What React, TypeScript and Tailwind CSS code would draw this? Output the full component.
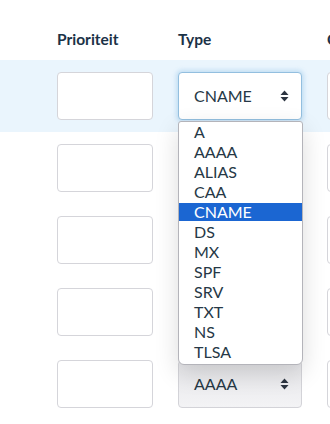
import { useState } from 'react';

const TYPES = ['A', 'AAAA', 'ALIAS', 'CAA', 'CNAME', 'DS', 'MX', 'SPF', 'SRV', 'TXT', 'NS', 'TLSA'];

function Arrows() {
  return (
    <svg width="9" height="12" viewBox="0 0 9 12" className="text-[#2b3440]">
      <path d="M4.5 0.5 L8.5 5 L0.5 5 Z" fill="currentColor" />
      <path d="M4.5 11.5 L8.5 7 L0.5 7 Z" fill="currentColor" />
    </svg>
  );
}

function Input() {
  return <div className="h-[48px] w-[96px] shrink-0 rounded-[4px] border border-[#d5d5da] bg-white" />;
}

function Select({ value, focused, open, muted }: { value: string; focused?: boolean; open?: boolean; muted?: boolean }) {
  return (
    <div className="relative w-[124px] shrink-0">
      <div
        className={
          focused
            ? 'flex h-[48px] items-center justify-between rounded-[4px] border border-[#93bfdf] bg-white pl-[15px] pr-[12px] shadow-[0_0_4px_2px_rgba(120,180,225,0.35)]'
            : muted
            ? 'flex h-[48px] items-center justify-between rounded-[4px] border border-[#d3d3d8] bg-gradient-to-b from-[#e6e6e9] to-[#f3f3f5] pl-[15px] pr-[12px]'
            : 'flex h-[48px] items-center justify-between rounded-[4px] border border-[#d5d5da] bg-white pl-[15px] pr-[12px]'
        }
      >
        <span className="text-[16px] leading-[18px] text-[#263846]">{value}</span>
        <Arrows />
      </div>
      {open && (
        <div className="absolute left-0 top-[calc(100%+1px)] z-10 flex w-[125px] flex-col gap-[2px] rounded-t-[3px] rounded-b-[6px] border border-[#b4b4ba] bg-white pt-[1px] pb-[3px] shadow-[0_8px_24px_rgba(0,0,0,0.14)]">
          {TYPES.map((t) => (
            <div
              key={t}
              className={
                t === value
                  ? 'h-[18px] bg-[#1b66d2] pl-[15px] text-[16px] leading-[18px] text-white'
                  : 'h-[18px] pl-[15px] text-[16px] leading-[18px] text-[#263846]'
              }
            >
              {t}
            </div>
          ))}
        </div>
      )}
    </div>
  );
}

export default function App() {
  // rows 2-4 sit under the open list, so their value is not shown
  const [rows] = useState(['CNAME', '', '', '', 'AAAA']);

  return (
    <div className="h-[424px] w-[330px] overflow-hidden bg-white font-['Lato',sans-serif]">
      <div className="flex h-[60px] items-end gap-[25px] pb-[12px] pl-[57px] text-[15.5px] font-bold leading-[18px] text-[#1b3247]">
        <div className="w-[96px] shrink-0">Prioriteit</div>
        <div className="w-[124px] shrink-0">Type</div>
        <div className="w-[96px] shrink-0">Content</div>
      </div>
      {rows.map((v, i) => (
        <div
          key={i}
          className={
            i === 0
              ? 'relative z-10 flex h-[72px] items-center gap-[25px] bg-[#eaf5fd] pl-[57px]'
              : 'flex h-[72px] items-center gap-[25px] pl-[57px]'
          }
        >
          <Input />
          <Select value={v} focused={i === 0} open={i === 0} muted={i === 4} />
          <Input />
        </div>
      ))}
    </div>
  );
}
